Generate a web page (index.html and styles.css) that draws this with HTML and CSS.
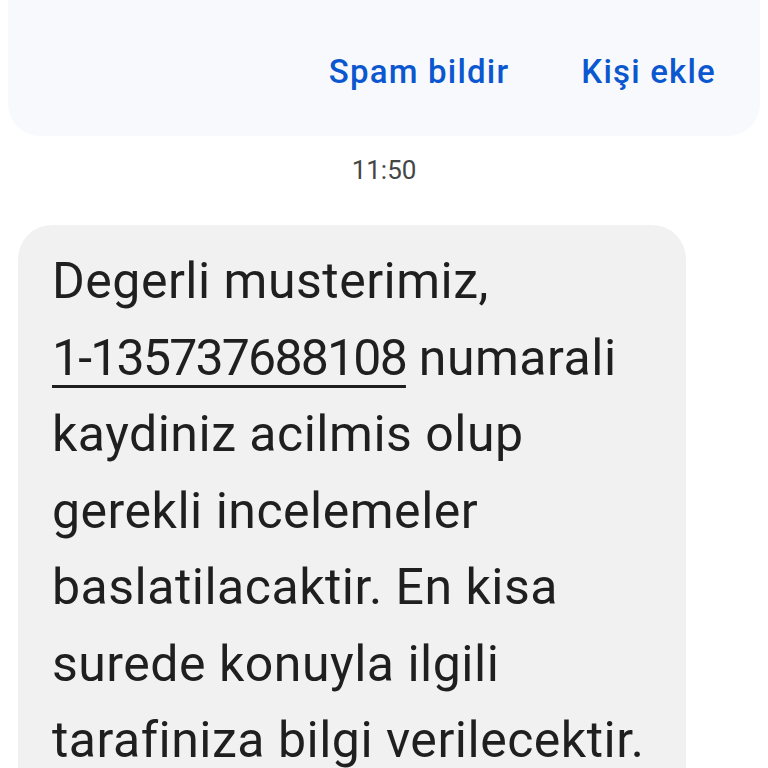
FILE: index.html
```html
<!DOCTYPE html>
<html>
<head>
  <meta charset="utf-8" />
  <title>Mesaj</title>
  <meta name="viewport" content="width=device-width, initial-scale=1">
  <link rel="stylesheet" href="styles.css">
</head>
<body>
  <div class="banner">
    <div class="actions">
      <span class="action">Spam bildir</span>
      <span class="action">Kişi ekle</span>
    </div>
  </div>
  <div class="stamp">11:50</div>
  <div class="bubble">
    <p class="msg">Degerli musterimiz, <span class="ref">1-135737688108</span> numarali kaydiniz acilmis olup gerekli incelemeler baslatilacaktir. En kisa surede konuyla ilgili tarafiniza bilgi verilecektir.</p>
  </div>
</body>
</html>
```

FILE: styles.css
```css
body {
  margin: 0;
  background: #fff;
  font-family: Roboto, "Open Sans", sans-serif;
  overflow: hidden;
}

.banner {
  margin: 0 8px;
  height: 136px;
  background: #f8f9fc;
  border-radius: 0 0 32px 32px;
  display: flex;
  align-items: flex-start;
  justify-content: flex-end;
}

.actions {
  display: flex;
  gap: 72px;
  margin-top: 50px;
  margin-right: 44px;
}

.action {
  color: #0b57d0;
  font-size: 33px;
  font-weight: 500;
  letter-spacing: 1.2px;
  line-height: 44px;
}

.stamp {
  text-align: center;
  color: #444746;
  font-size: 26px;
  line-height: 36px;
  margin-top: 16px;
}

.bubble {
  margin: 37px 0 0 18px;
  width: 668px;
  box-sizing: border-box;
  background: #f1f1f1;
  border-radius: 34px;
  padding: 18px 30px 40px 34px;
}

.msg {
  margin: 0;
  color: #1f1f1f;
  font-size: 50px;
  letter-spacing: 0.5px;
  line-height: 76.5px;
}

.ref {
  white-space: nowrap;
  letter-spacing: -1.8px;
  text-decoration: underline;
  text-decoration-thickness: 3px;
  text-underline-offset: 10px;
}
```
